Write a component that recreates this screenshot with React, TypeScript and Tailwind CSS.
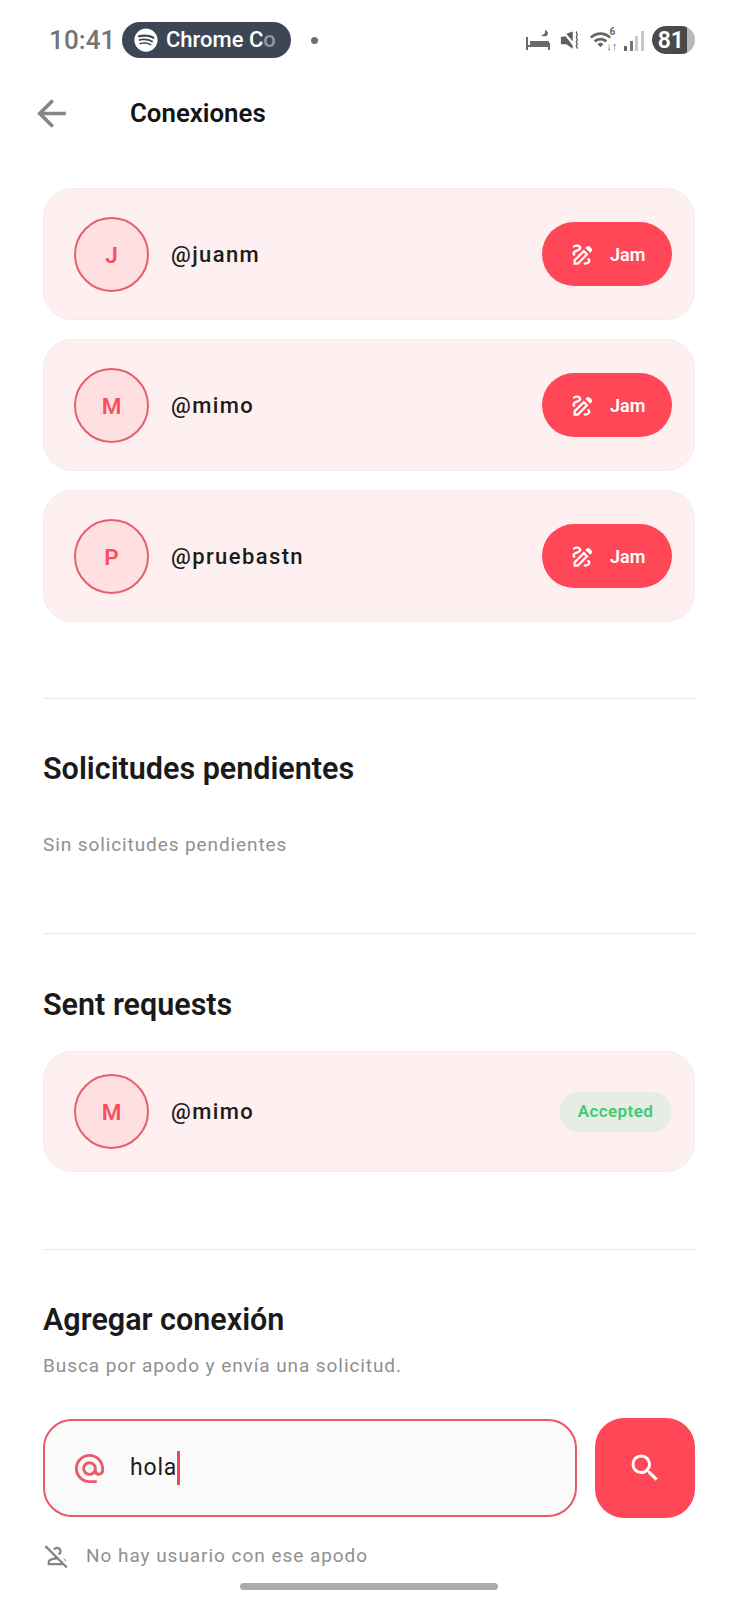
import { MdAlternateEmail, MdArrowBack, MdOutlineDraw, MdOutlinePersonOff, MdSearch, MdWifi } from 'react-icons/md';
import { FaSpotify } from 'react-icons/fa';

const connections = [
  { initial: 'J', name: '@juanm' },
  { initial: 'M', name: '@mimo' },
  { initial: 'P', name: '@pruebastn' },
];

const BedIcon = () => (
  <svg width="24" height="22" viewBox="0 0 24 22" className="text-[#6a6a6a]">
    <path d="M1 8v13M23 14v7M1 17h22" stroke="currentColor" strokeWidth="2" fill="none" />
    <path d="M4 12h19v4H4z" fill="currentColor" />
    <path d="M19 1c.6 3-1 5-4 5 1.500 2 6.500 2 7-1.500.2-1.500-1-3-3-3.500z" fill="currentColor" />
  </svg>
);

const MuteIcon = () => (
  <svg width="20" height="21" viewBox="0 0 22 22" className="text-[#5e5e5e]">
    <path d="M1 7h3l2-1 8 9v5L7 15H1z" fill="currentColor" />
    <path d="M7 3.500 14 1v11z" fill="currentColor" />
    <path d="M3 1l13 17" stroke="#fff" strokeWidth="1.500" />
    <path d="M18.500 1c-2 2 2 3 0 5s2 3 0 5 2 3 0 5 1.500 2 .5 4" stroke="currentColor" strokeWidth="1.500" fill="none" />
  </svg>
);

const StatusBar = () => (
  <div className="flex h-[80px] items-center pl-[49px] pr-[43px] text-[#747474]">
    <span className="w-[73px] text-[26px] font-medium leading-none tracking-[0.1px]">10:41</span>
    <div className="flex h-[36px] w-[169px] items-center overflow-hidden rounded-full bg-[#3d4656] pl-[12px] text-white">
      <FaSpotify className="shrink-0 text-[24px]" />
      <span className="ml-[8px] whitespace-nowrap text-[22px] font-medium leading-none">Chrome C<span className="text-[#9298a3]">o</span></span>
    </div>
    <div className="ml-[20px] h-[7px] w-[7px] rounded-full bg-[#6b6f75]" />
    <div className="ml-auto flex items-center text-[#666666]">
      <BedIcon />
      <div className="ml-[10px]"><MuteIcon /></div>
      <div className="relative ml-[11px] h-[22px] w-[26px]">
        <MdWifi className="absolute -left-[2px] -top-[1px] text-[23px]" />
        <span className="absolute right-[2px] -top-[2px] text-[10px] font-bold leading-none">6</span>
        <span className="absolute bottom-[-1px] right-[0px] text-[11px] font-bold leading-none">↓↑</span>
      </div>
      <div className="ml-[7px] flex h-[21px] items-end gap-[2.600px]">
        <div className="h-[5px] w-[3px] bg-[#666666]" />
        <div className="h-[10px] w-[3px] bg-[#777777]" />
        <div className="h-[15px] w-[3px] bg-[#c8c8c8]" />
        <div className="h-[20px] w-[3px] bg-[#c8c8c8]" />
      </div>
      <div className="ml-[8px] flex h-[28px] w-[43px] items-center overflow-hidden rounded-full bg-[#b8b8b8]">
        <div className="flex h-full w-[35px] items-center justify-end rounded-l-full bg-[#4a4a4a] pr-[3px] text-[23px] font-semibold leading-none text-white">81</div>
      </div>
    </div>
  </div>
);

const Avatar = ({ initial }: { initial: string }) => (
  <div className="flex h-[75px] w-[75px] shrink-0 items-center justify-center rounded-full border-2 border-[#ea5d6b] bg-[#fee0e2] pt-[3px] text-[22.500px] font-semibold text-[#fb4d5e]">
    {initial}
  </div>
);

const ConnectionCard = ({ initial, name }: { initial: string; name: string }) => (
  <div className="flex h-[132px] items-center rounded-[29px] border border-[#f4ecec] bg-[#fef0f0] pl-[30px] pr-[22px]">
    <Avatar initial={initial} />
    <span className="ml-[22px] text-[22px] font-medium tracking-[1.400px] text-[#1c1c1c]">{name}</span>
    <button className="ml-auto flex h-[64px] w-[130px] items-center rounded-full bg-[#ff4757] pl-[27px] text-white">
      <MdOutlineDraw className="text-[27px]" />
      <span className="ml-[14px] text-[18px] font-semibold">Jam</span>
    </button>
  </div>
);

const Divider = () => <div className="h-px bg-[#e8e8e8]" />;

const SectionTitle = ({ children }: { children: string }) => (
  <h2 className="text-[30.500px] font-semibold leading-[36px] text-[#1a1a1a]">{children}</h2>
);

export default function App() {
  return (
    <div className="relative h-[1600px] w-[738px] overflow-hidden bg-white font-['Roboto',sans-serif]">
      <StatusBar />
      <div className="flex h-[66px] items-center pl-[30px]">
        <MdArrowBack className="text-[43px] text-[#858585]" />
        <h1 className="ml-[57px] text-[25.800px] font-semibold text-[#151515]">Conexiones</h1>
      </div>

      <div className="px-[43px] pt-[42px]">
        <div className="flex flex-col gap-[19px]">
          {connections.map((c) => (
            <ConnectionCard key={c.name} {...c} />
          ))}
        </div>

        <div className="mt-[76px]"><Divider /></div>
        <div className="mt-[52px]"><SectionTitle>Solicitudes pendientes</SectionTitle></div>
        <p className="mt-[46px] text-[19px] leading-[24px] tracking-[0.900px] text-[#909090]">Sin solicitudes pendientes</p>

        <div className="mt-[76px]"><Divider /></div>
        <div className="mt-[53px]"><SectionTitle>Sent requests</SectionTitle></div>

        <div className="mt-[28px] flex h-[121px] items-center rounded-[29px] border border-[#f4ecec] bg-[#fef0f0] pl-[30px] pr-[22px]">
          <Avatar initial="M" />
          <span className="ml-[22px] text-[22px] font-medium tracking-[1.400px] text-[#1c1c1c]">@mimo</span>
          <div className="ml-auto flex h-[40px] w-[113px] items-center justify-center rounded-full bg-[#e4eee5] text-[17px] font-semibold tracking-[0.4px] text-[#3fca6f]">
            Accepted
          </div>
        </div>

        <div className="mt-[77px]"><Divider /></div>
        <div className="mt-[52px]"><SectionTitle>Agregar conexión</SectionTitle></div>
        <p className="mt-[16px] text-[19px] leading-[24px] tracking-[0.920px] text-[#909090]">Busca por apodo y envía una solicitud.</p>

        <div className="mt-[40px] flex items-center gap-[18px]">
          <div className="flex h-[98px] flex-1 items-center rounded-[29px] border-2 border-[#e9596a] bg-[#fafafa] pl-[27px]">
            <MdAlternateEmail className="text-[35px] text-[#ee5a69]" />
            <span className="ml-[23px] text-[23px] tracking-[0.8px] text-[#1c1c1c]">hola</span>
            <div className="h-[34px] w-[3px] bg-[#e9495a]" />
          </div>
          <button className="flex h-[100px] w-[100px] items-center justify-center rounded-[29px] bg-[#ff4757] text-white">
            <MdSearch className="text-[36px]" />
          </button>
        </div>

        <div className="mt-[24px] flex items-center">
          <MdOutlinePersonOff className="text-[28px] text-[#858585]" />
          <span className="ml-[15px] text-[19px] leading-[24px] tracking-[0.960px] text-[#909090]">No hay usuario con ese apodo</span>
        </div>
      </div>

      <div className="absolute bottom-[10px] left-[240px] h-[7px] w-[258px] rounded-full bg-[#ababab]" />
    </div>
  );
}
